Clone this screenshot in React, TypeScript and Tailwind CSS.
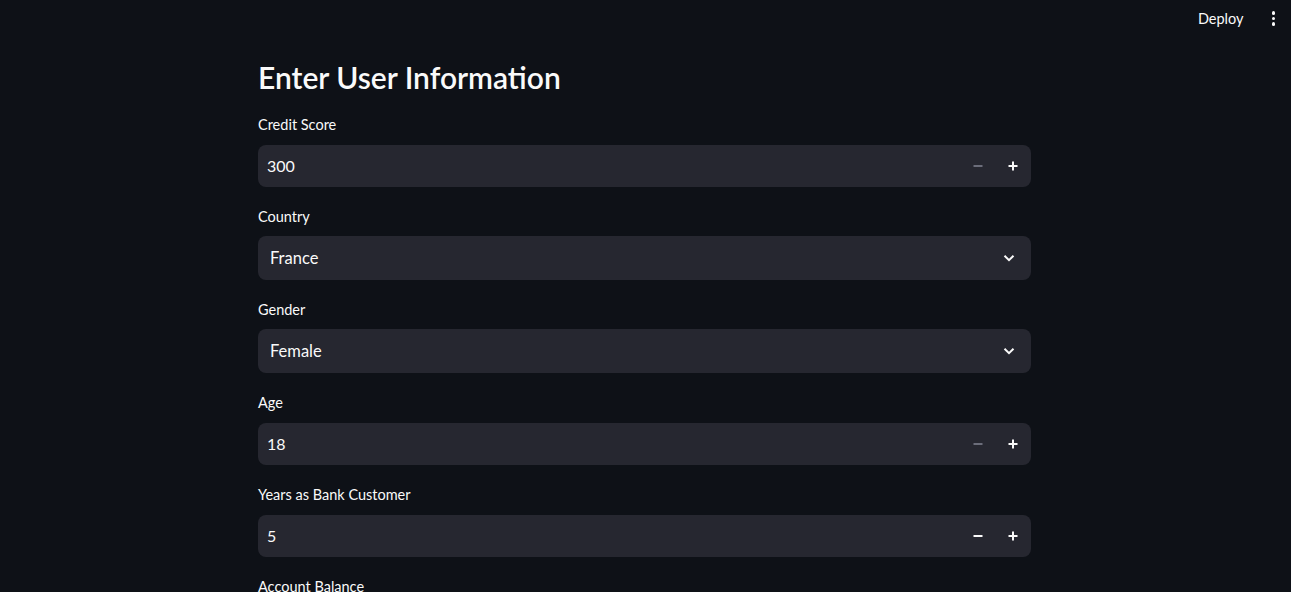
import React from "react";

const Plus = ({ className = "" }: { className?: string }) => (
  <svg width="10" height="10" viewBox="0 0 10 10" className={className}>
    <path d="M5 0.5V9.5M0.5 5H9.5" stroke="currentColor" strokeWidth="2" />
  </svg>
);

const Minus = ({ className = "" }: { className?: string }) => (
  <svg width="10" height="10" viewBox="0 0 10 10" className={className}>
    <path d="M0.5 5H9.5" stroke="currentColor" strokeWidth="2" />
  </svg>
);

const Chevron = () => (
  <svg width="14" height="14" viewBox="0 0 14 14" className="text-[#fafafa]">
    <path d="M2.5 4.8L7 9.2L11.5 4.8" stroke="currentColor" strokeWidth="2" fill="none" />
  </svg>
);

function NumberField({ label, value, minDisabled }: { label: string; value: string; minDisabled?: boolean }) {
  return (
    <div className="flex flex-col">
      <div className="h-[20px] flex items-center text-[14.5px] text-[#fafafa]">{label}</div>
      <div className="mt-[10px] h-[42px] rounded-lg bg-[#262730] flex items-center">
        <div className="flex-1 pl-[9px] text-[16px] text-[#fafafa]">{value}</div>
        <div className="flex items-center h-full">
          <div className={`w-[35px] h-full flex items-center justify-center ${minDisabled ? "text-[#6b6d7a]" : "text-[#fafafa]"}`}>
            <Minus />
          </div>
          <div className="w-[35px] h-full flex items-center justify-center text-[#fafafa] mr-[1px]">
            <Plus />
          </div>
        </div>
      </div>
    </div>
  );
}

function SelectField({ label, value }: { label: string; value: string }) {
  return (
    <div className="flex flex-col">
      <div className="h-[20px] flex items-center text-[14.5px] text-[#fafafa]">{label}</div>
      <div className="mt-[9px] h-[44px] rounded-lg bg-[#262730] flex items-center">
        <div className="flex-1 pl-[12px] text-[16.5px] text-[#fafafa]">{value}</div>
        <div className="pr-[15px] flex items-center">
          <Chevron />
        </div>
      </div>
    </div>
  );
}

export default function App() {
  return (
    <div
      className="relative h-[592px] w-full overflow-hidden bg-[#0e1117] text-[#fafafa]"
      style={{ fontFamily: '"Source Sans Pro", Lato, "Noto Sans", sans-serif' }}
    >
      <div className="absolute top-0 right-0 h-[37px] flex items-center">
        <div className="text-[14.5px] text-[#fafafa] mr-[28px]">Deploy</div>
        <div className="flex flex-col items-center gap-[2px] mr-[16px]">
          <span className="block w-[3.5px] h-[3.5px] rounded-full bg-[#fafafa]" />
          <span className="block w-[3.5px] h-[3.5px] rounded-full bg-[#fafafa]" />
          <span className="block w-[3.5px] h-[3.5px] rounded-full bg-[#fafafa]" />
        </div>
      </div>
      <div className="pl-[258px] pt-[57px]">
        <div className="w-[773px] flex flex-col">
          <h1 className="h-[40px] flex items-center text-[30px] font-semibold text-[#fafafa] leading-none mb-[18px]">
            Enter User Information
          </h1>
          <div className="flex flex-col gap-[20px]">
            <NumberField label="Credit Score" value="300" minDisabled />
            <SelectField label="Country" value="France" />
            <SelectField label="Gender" value="Female" />
            <NumberField label="Age" value="18" minDisabled />
            <NumberField label="Years as Bank Customer" value="5" />
            <NumberField label="Account Balance" value="0.00" />
          </div>
        </div>
      </div>
    </div>
  );
}
